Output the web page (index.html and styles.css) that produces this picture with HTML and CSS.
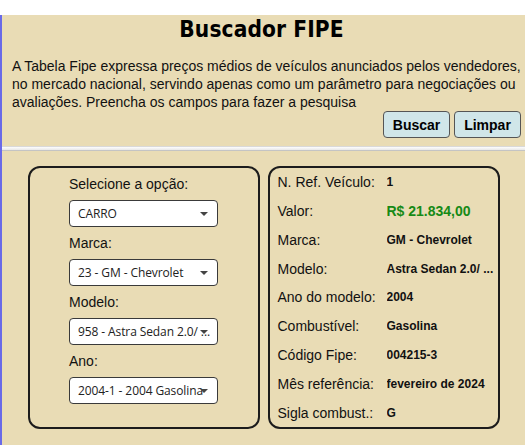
FILE: index.html
```html
<!DOCTYPE html>
<html lang="pt-BR">
<head>
<meta charset="utf-8">
<title>Buscador FIPE</title>
<link rel="stylesheet" href="styles.css">
</head>
<body>
<div class="app">
  <header class="top">
    <h1 class="title">Buscador FIPE</h1>
    <p class="intro">A Tabela Fipe expressa preços médios de veículos anunciados pelos vendedores, no mercado nacional, servindo apenas como um parâmetro para negociações ou avaliações. Preencha os campos para fazer a pesquisa</p>
    <div class="actions">
      <button class="btn" type="button">Buscar</button>
      <button class="btn" type="button">Limpar</button>
    </div>
  </header>
  <div class="rule"></div>
  <main class="panels">
    <section class="panel panel-form">
      <div class="form-col">
        <label class="field-label">Selecione a opção:</label>
        <div class="select-wrap"><select class="field-select"><option>CARRO</option></select></div>
        <label class="field-label">Marca:</label>
        <div class="select-wrap"><select class="field-select"><option>23 - GM - Chevrolet</option></select></div>
        <label class="field-label">Modelo:</label>
        <div class="select-wrap"><select class="field-select"><option>958 - Astra Sedan 2.0/ ...</option></select></div>
        <label class="field-label">Ano:</label>
        <div class="select-wrap"><select class="field-select"><option>2004-1 - 2004 Gasolina</option></select></div>
      </div>
    </section>
    <section class="panel panel-info">
      <div class="info-label">N. Ref. Veículo:</div><div class="info-value">1</div>
      <div class="info-label">Valor:</div><div class="info-value price">R$ 21.834,00</div>
      <div class="info-label">Marca:</div><div class="info-value">GM - Chevrolet</div>
      <div class="info-label">Modelo:</div><div class="info-value">Astra Sedan 2.0/ ...</div>
      <div class="info-label">Ano do modelo:</div><div class="info-value">2004</div>
      <div class="info-label">Combustível:</div><div class="info-value">Gasolina</div>
      <div class="info-label">Código Fipe:</div><div class="info-value">004215-3</div>
      <div class="info-label">Mês referência:</div><div class="info-value">fevereiro de 2024</div>
      <div class="info-label">Sigla combust.:</div><div class="info-value">G</div>
    </section>
  </main>
</div>
</body>
</html>
```
FILE: styles.css
```css
html, body {
  margin: 0;
  height: 100%;
  overflow: hidden;
  background: #ffffff;
}

.app {
  box-sizing: border-box;
  width: 527px;
  height: 449px;
  border: 2px solid #6a6ae8;
  border-top: 0;
  border-radius: 0 0 10px 10px;
  background: #e9dcb5;
  font-family: "Liberation Sans", Arial, sans-serif;
  color: #111;
}

.title {
  margin: 15px 0 0;
  padding-right: 4px;
  font-family: "DejaVu Sans", sans-serif;
  font-weight: bold;
  font-size: 22.5px;
  line-height: 28px;
  font-stretch: condensed;
  letter-spacing: 0.1px;
  text-align: center;
  color: #000;
}

.intro {
  margin: 14px 0 0;
  padding: 0 0 0 10px;
  font-size: 14px;
  line-height: 18px;
}

.actions {
  display: flex;
  justify-content: flex-end;
  gap: 4px;
  padding-right: 4px;
}

.btn {
  box-sizing: border-box;
  width: 67px;
  height: 27px;
  padding: 0;
  border: 1px solid #555;
  border-radius: 4px;
  background: #d0e6e9;
  font-family: "Liberation Sans", Arial, sans-serif;
  font-weight: bold;
  font-size: 14px;
  color: #000;
}

.rule {
  box-sizing: border-box;
  margin-top: 8px;
  height: 5px;
  border-top: 1px solid #d9d9d9;
  border-bottom: 1px solid #c4c4c4;
  background: linear-gradient(#fdfdfd, #e8e8e8);
}

.panels {
  display: flex;
  justify-content: center;
  gap: 8px;
  margin-top: 15px;
}

.panel {
  box-sizing: border-box;
  width: 232px;
  border: 2px solid #1c1c1c;
  border-radius: 12px;
}

.panel-form {
  padding: 8px 0 23px;
}

.form-col {
  width: 149px;
  margin: 0 auto;
  display: flex;
  flex-direction: column;
  gap: 8px;
}

.field-label {
  font-size: 14px;
  line-height: 16px;
  color: #111;
}

.select-wrap {
  position: relative;
}

.select-wrap::after {
  content: "";
  position: absolute;
  right: 10px;
  top: 12px;
  border-left: 4px solid transparent;
  border-right: 4px solid transparent;
  border-top: 4px solid #444;
  pointer-events: none;
}

.field-select {
  display: block;
  box-sizing: border-box;
  width: 149px;
  height: 27px;
  margin: 0;
  padding: 0 0 0 8px;
  appearance: none;
  -webkit-appearance: none;
  border: 1px solid #3a3a3a;
  border-radius: 4px;
  background: #fff;
  font-family: "Open Sans", sans-serif;
  font-size: 12px;
  letter-spacing: -0.1px;
  color: #222;
}

.panel-info {
  display: grid;
  grid-template-columns: 109px 1fr;
  grid-template-rows: repeat(9, 1fr);
  align-items: center;
  padding: 0 4px 0 8px;
}

.info-label {
  font-size: 14px;
  line-height: 16px;
  white-space: nowrap;
  color: #111;
}

.info-value {
  font-size: 12px;
  line-height: 16px;
  font-weight: bold;
  white-space: nowrap;
  overflow: hidden;
  color: #111;
}

.info-value.price {
  font-size: 14px;
  color: #168a16;
}
```
